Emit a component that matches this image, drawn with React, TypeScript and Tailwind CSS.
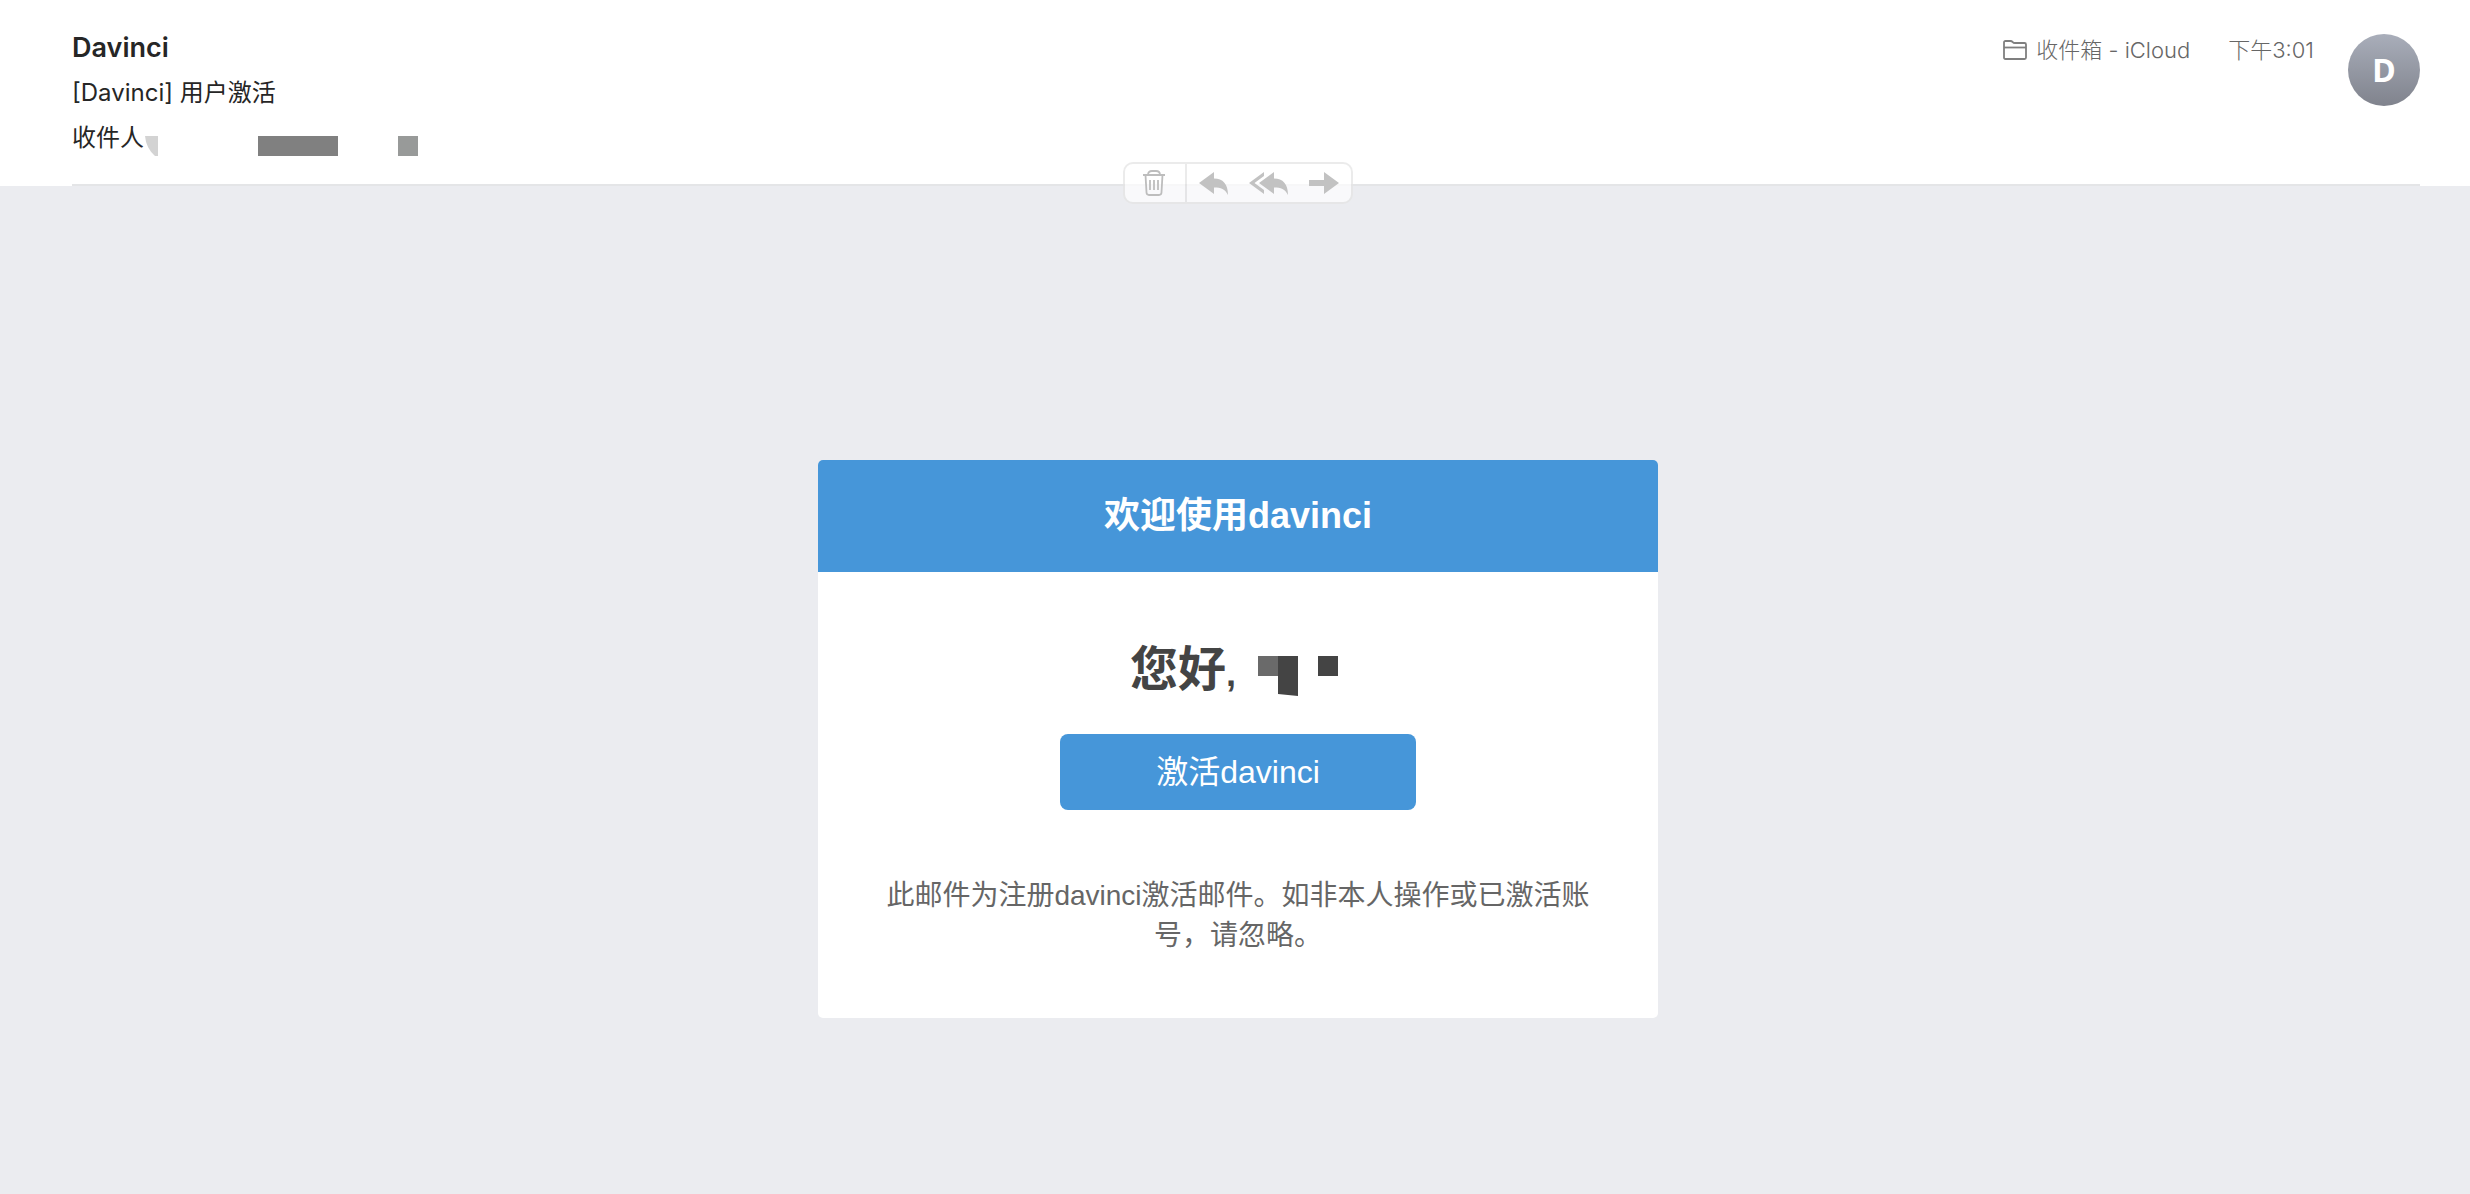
import React from "react";

const sans = "font-['Liberation_Sans','Noto_Sans_CJK_SC',sans-serif]";

function FolderIcon() {
  return (
    <svg className="h-5 w-6" viewBox="0 0 24 20" fill="none" stroke="#7f7f7f" strokeWidth="1.800" aria-hidden="true">
      <path d="M1 17.500V2.500Q1 1 2.500 1H7.500Q8.800 1 9.500 1.800Q10.500 3 12 3H21.500Q23 3 23 4.500V17.500Q23 19 21.500 19H2.500Q1 19 1 17.500Z" />
      <path d="M1 7.500H23" />
    </svg>
  );
}

function TrashIcon() {
  return (
    <svg className="h-[26px] w-[22px]" viewBox="0 0 22 26" fill="none" stroke="#bdbdbd" strokeWidth="1.800" aria-hidden="true">
      <path d="M0 5H22M5 5C5 2 6.500 1 9 1H13C15.500 1 17 2 17 5M2.500 5L3.500 22.500Q3.700 25 6 25H16Q18.300 25 18.500 22.500L19.500 5M7 10V20M11 10V20M15 10V20" />
    </svg>
  );
}

function ReplyIcon() {
  return (
    <svg className="h-[23px] w-[30px]" viewBox="0 0 30 23" fill="#c2c2c2" aria-hidden="true">
      <path d="M15 0V6.500C24 6.500 29 12 29 23C26 17 22 15.500 15 15.500V22L0 11Z" />
    </svg>
  );
}

function ReplyAllIcon() {
  return (
    <svg className="h-[23px] w-10" viewBox="0 0 40 23" fill="#c2c2c2" aria-hidden="true">
      <path d="M15 0V4L5.500 11L15 18V22L0 11Z" />
      <path d="M25 0V6.500C34 6.500 39 12 39 23C36 17 32 15.500 25 15.500V22L10 11Z" />
    </svg>
  );
}

function ForwardIcon() {
  return (
    <svg className="h-[22px] w-[30px]" viewBox="0 0 30 22" fill="#c2c2c2" aria-hidden="true">
      <path d="M15 0L30 11L15 22V14H0V8H15Z" />
    </svg>
  );
}

function Toolbar() {
  return (
    <div className="absolute inset-x-0 -bottom-[18px] flex justify-center pl-[6px]">
      <div className="flex h-[42px] w-[230px] rounded-[10px] border-2 border-black/8 bg-white/70">
        <button type="button" aria-label="删除" className="flex w-[62px] items-center justify-center border-r-2 border-black/8 pr-[2px]">
          <TrashIcon />
        </button>
        <div className="flex flex-1 items-center justify-between px-3">
          <button type="button" aria-label="回复"><ReplyIcon /></button>
          <button type="button" aria-label="全部回复"><ReplyAllIcon /></button>
          <button type="button" aria-label="转发"><ForwardIcon /></button>
        </div>
      </div>
    </div>
  );
}

function MailHeader() {
  return (
    <header className="relative bg-white pr-[50px] pl-[72px] font-['Inter','Noto_Sans_CJK_SC',sans-serif]">
      <div className="flex items-start justify-between border-b-2 border-[#e4e5e7] pb-6">
        <div className="pt-[26px] text-2xl text-[#262626]">
          <h1 className="text-[27px] leading-[44px] font-semibold">Davinci</h1>
          <p className="leading-[46px]">[Davinci] 用户激活</p>
          <div className="flex h-11 items-center">
            <span className="leading-10">收件人</span>
            <svg className="mt-4 h-5 w-[274px]" viewBox="0 0 274 20" aria-hidden="true">
              <path d="M1 0H14V20H11Q2 12 1 0Z" fill="#d3d3d3" />
              <path d="M114 0H194V20H114Z" fill="#808080" />
              <path d="M254 0H274V20H254Z" fill="#989a99" />
            </svg>
          </div>
        </div>
        <div className="flex items-start pt-[34px] text-[22px] leading-8 font-light text-[#666666]">
          <span className="mr-[38px] flex items-center gap-[9px]">
            <FolderIcon />
            收件箱 - iCloud
          </span>
          <time>下午3:01</time>
          <span className="ml-[34px] flex size-[72px] items-center justify-center rounded-full bg-linear-to-b from-[#a9aeba] to-[#80838d] font-['Noto_Sans',sans-serif] text-[32px] font-bold text-white">
            D
          </span>
        </div>
      </div>
      <Toolbar />
    </header>
  );
}

function ActivationCard() {
  return (
    <section className={"w-[840px] max-w-full overflow-hidden rounded-[5px] bg-white text-center " + sans}>
      <h2 className="bg-[#4696d9] py-7 text-4xl leading-[56px] font-bold text-white">欢迎使用davinci</h2>
      <div className="px-16 pt-[68px] pb-[62px]">
        <h3 className="flex items-center justify-center text-5xl leading-[60px] font-bold text-[#444444]">
          <span>您好<span className="text-4xl">,</span></span>
          <svg className="mt-3 ml-[22px] h-10 w-[88px]" viewBox="0 0 88 40" aria-hidden="true">
            <path d="M0 0H20V20H0Z" fill="#6a6a6a" />
            <path d="M20 0H40V40L20 38Z" fill="#444444" />
            <path d="M60 0H80V20H60Z" fill="#444444" />
          </svg>
        </h3>
        <a href="#activate" className="mx-auto mt-[34px] block w-[356px] rounded-lg bg-[#4696d9] py-[14px] text-[32px] leading-[48px] text-white">
          激活davinci
        </a>
        <p className="mt-[66px] text-[28px] leading-10 text-[#666666]">
          此邮件为注册davinci激活邮件。如非本人操作或已激活账号，请忽略。
        </p>
      </div>
    </section>
  );
}

export default function App() {
  return (
    <div className="flex min-h-screen flex-col bg-[#ebecf0]">
      <MailHeader />
      <main className="flex flex-1 items-start justify-center pt-[274px] pb-16 pl-[6px]">
        <ActivationCard />
      </main>
    </div>
  );
}
